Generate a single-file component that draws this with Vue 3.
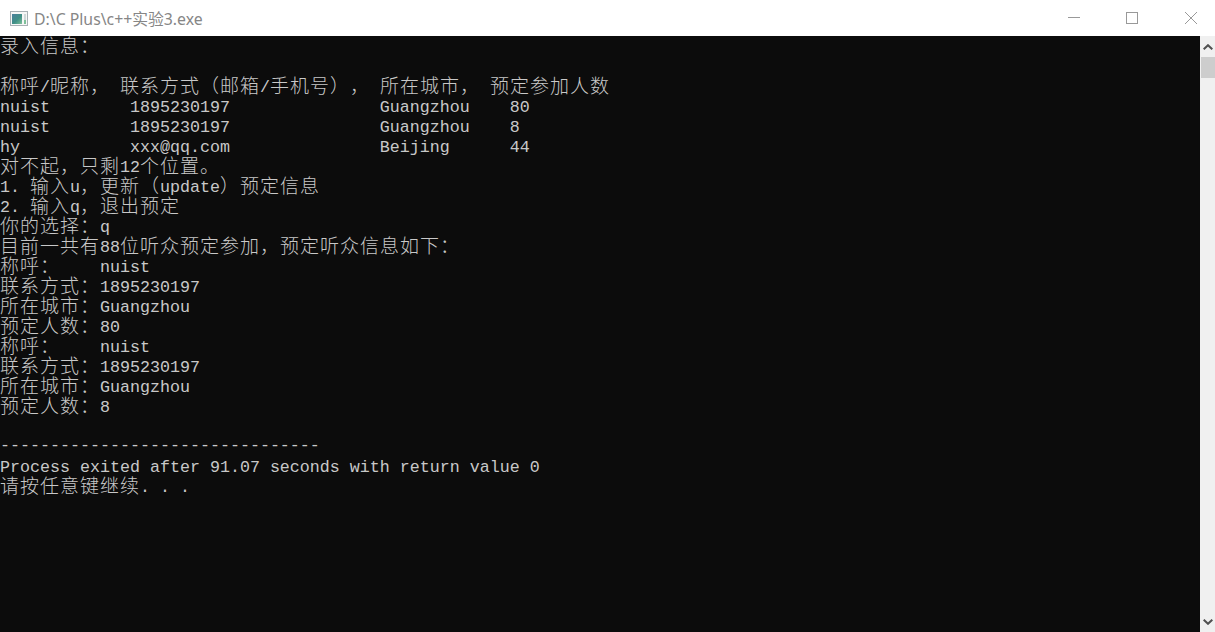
<script setup>
const source = [
  '录入信息：',
  '',
  '称呼/昵称， 联系方式（邮箱/手机号）， 所在城市， 预定参加人数',
  'nuist        1895230197               Guangzhou    80',
  'nuist        1895230197               Guangzhou    8',
  'hy           xxx@qq.com               Beijing      44',
  '对不起，只剩12个位置。',
  '1. 输入u，更新（update）预定信息',
  '2. 输入q，退出预定',
  '你的选择：q',
  '目前一共有88位听众预定参加，预定听众信息如下：',
  '称呼：    nuist',
  '联系方式：1895230197',
  '所在城市：Guangzhou',
  '预定人数：80',
  '称呼：    nuist',
  '联系方式：1895230197',
  '所在城市：Guangzhou',
  '预定人数：8',
  '',
  '--------------------------------',
  'Process exited after 91.07 seconds with return value 0',
  '请按任意键继续. . .'
]

const kindOf = (part) => {
  if (/[^\x00-\x7f]/.test(part)) return 'wide'
  if (/^-+$/.test(part)) return 'narrow dashes'
  return 'narrow'
}

const lines = source.map((text) =>
  (text.match(/[^\x00-\x7f]+|[\x00-\x7f]+/g) || []).map((part) => ({
    text: part,
    kind: kindOf(part)
  }))
)
</script>

<template>
  <div class="window">
    <header class="titlebar">
      <svg class="app-icon" width="18" height="15" viewBox="0 0 18 15">
        <defs>
          <linearGradient id="screen" x1="0" y1="0" x2="1" y2="1">
            <stop offset="0" stop-color="#4a7f9c" />
            <stop offset="0.55" stop-color="#3f8f86" />
            <stop offset="1" stop-color="#7fc09a" />
          </linearGradient>
        </defs>
        <rect x="0.5" y="0.5" width="17" height="14" fill="#f6f6f6" stroke="#a8b0b4" />
        <rect x="2" y="3" width="10" height="10" fill="url(#screen)" />
        <rect x="14" y="3" width="2" height="6" fill="#cfd8d8" />
        <rect x="14" y="9" width="2" height="4" fill="#7fc09a" />
      </svg>
      <span class="title">D:\C Plus\c++实验3.exe</span>
      <div class="controls">
        <svg class="control" width="12" height="12" viewBox="0 0 12 12">
          <path d="M0 5.5H12" stroke="#999" fill="none" />
        </svg>
        <svg class="control" width="12" height="12" viewBox="0 0 12 12">
          <rect x="0.5" y="0.5" width="11" height="11" stroke="#999" fill="none" />
        </svg>
        <svg class="control close" width="12" height="12" viewBox="0 0 12 12">
          <path d="M0 0L12 12M12 0L0 12" stroke="#999" fill="none" />
        </svg>
      </div>
    </header>
    <div class="body">
      <main class="console">
        <div v-for="(line, i) in lines" :key="i" class="line">
          <span v-for="(part, j) in line" :key="j" :class="part.kind">{{ part.text }}</span>
        </div>
      </main>
      <aside class="scrollbar">
        <div class="arrow">
          <svg width="10" height="6" viewBox="0 0 10 6"><path d="M0.7 5.3L5 1.2L9.3 5.3" stroke="#505050" stroke-width="2" fill="none" /></svg>
        </div>
        <div class="thumb"></div>
        <div class="track"></div>
        <div class="arrow">
          <svg width="10" height="6" viewBox="0 0 10 6"><path d="M0.7 0.7L5 4.8L9.3 0.7" stroke="#505050" stroke-width="2" fill="none" /></svg>
        </div>
      </aside>
    </div>
  </div>
</template>

<style>
html, body {
  margin: 0;
  overflow: hidden;
  background: #0c0c0c;
}
</style>

<style scoped>
.window {
  width: 1215px;
  height: 632px;
  display: flex;
  flex-direction: column;
  overflow: hidden;
}
.titlebar {
  flex: 0 0 36px;
  display: flex;
  align-items: center;
  background: #fff;
  padding: 0 18px 0 10px;
}
.app-icon {
  margin-right: 6px;
}
.title {
  font-family: "Noto Sans", "Noto Sans CJK SC", sans-serif;
  font-size: 15.8px;
  color: #868686;
  white-space: pre;
  text-spacing-trim: space-all;
}
.controls {
  margin-left: auto;
  display: flex;
  gap: 46px;
}
.close {
  margin-left: 1px;
}
.body {
  flex: 1;
  display: flex;
  min-height: 0;
}
.console {
  flex: 1;
  background: #0c0c0c;
  color: #c8c8c8;
}
.line {
  height: 20px;
  display: flex;
  white-space: pre;
}
.narrow,
.wide {
  display: block;
  height: 20px;
}
.narrow {
  font-family: "Liberation Mono", monospace;
  font-size: 16.667px;
  line-height: 24px;
}
.dashes {
  line-height: 20px;
}
.wide {
  font-family: "Noto Sans CJK SC", sans-serif;
  font-size: 19px;
  font-weight: 300;
  line-height: 18px;
  letter-spacing: 1px;
  text-spacing-trim: space-all;
  font-kerning: none;
}
.scrollbar {
  flex: 0 0 15px;
  display: flex;
  flex-direction: column;
  background: #f0f0f0;
}
.arrow {
  flex: 0 0 21px;
  display: flex;
  align-items: center;
  justify-content: center;
}
.thumb {
  flex: 0 0 21px;
  margin-left: 1px;
  background: #cdcdcd;
}
.track {
  flex: 1;
}
</style>
